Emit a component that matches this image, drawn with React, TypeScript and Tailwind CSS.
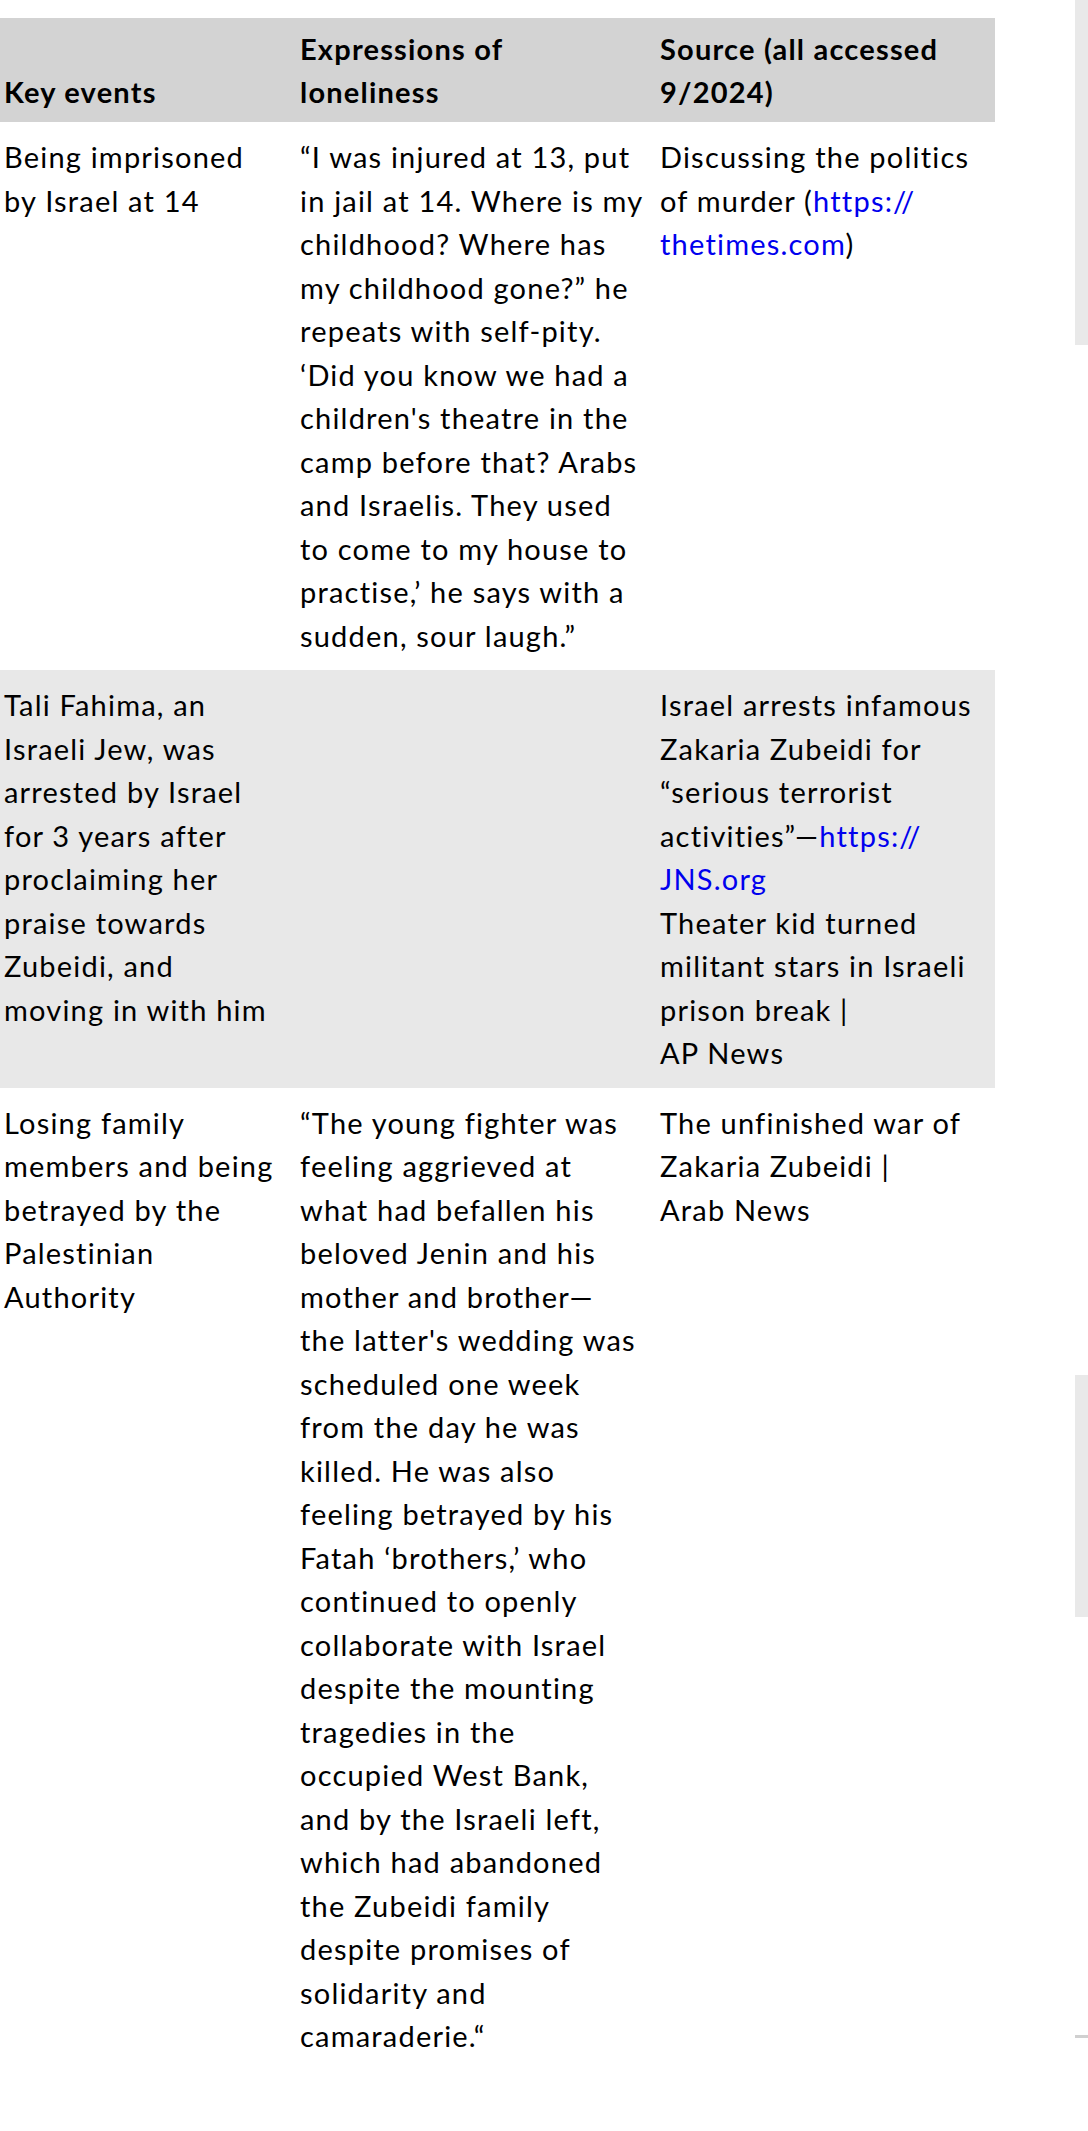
const link = "text-[#0000ee]";

type Row = {
  event: React.ReactNode;
  expression: React.ReactNode;
  source: React.ReactNode;
  shaded?: boolean;
};

// the quote in the first row keeps the line breaks of the source layout
const firstQuote = [
  "\u201CI was injured at 13, put",
  "in jail at 14. Where is my",
  "childhood? Where has",
  "my childhood gone?\u201D he",
  "repeats with self-pity.",
  "\u2018Did you know we had a",
  "children's theatre in the",
  "camp before that? Arabs",
  "and Israelis. They used",
  "to come to my house to",
  "practise,\u2019 he says with a",
  "sudden, sour laugh.\u201D",
];

const rows: Row[] = [
  {
    event: "Being imprisoned by Israel at 14",
    expression: firstQuote.map((line, i) => (
      <span key={i} className="block whitespace-nowrap">
        {line}
      </span>
    )),
    source: (
      <>
        Discussing the politics of murder (
        <a className={link} href="#">
          https://<wbr />thetimes.com
        </a>
        )
      </>
    ),
  },
  {
    event:
      "Tali Fahima, an Israeli Jew, was arrested by Israel for 3 years after proclaiming her praise towards Zubeidi, and moving in with him",
    expression: "",
    source: (
      <>
        Israel arrests infamous Zakaria Zubeidi for {"\u201C"}serious terrorist activities{"\u201D\u2014"}
        <a className={link} href="#">
          https://<wbr />JNS.org
        </a>
        <br />
        Theater kid turned militant stars in Israeli prison break |
        <br />
        AP News
      </>
    ),
    shaded: true,
  },
  {
    event: "Losing family members and being betrayed by the Palestinian Authority",
    expression:
      "\u201CThe young fighter was feeling aggrieved at what had befallen his beloved Jenin and his mother and brother\u2014the latter's wedding was scheduled one week from the day he was killed. He was also feeling betrayed by his Fatah \u2018brothers,\u2019 who continued to openly collaborate with Israel despite the mounting tragedies in the occupied West Bank, and by the Israeli left, which had abandoned the Zubeidi family despite promises of solidarity and camaraderie.\u201C",
    source: (
      <>
        The unfinished war of Zakaria Zubeidi |
        <br />
        Arab News
      </>
    ),
  },
];

export default function App() {
  return (
    <div className="flex min-h-[2131px] w-[1088px] bg-white font-['Lato','Noto_Sans',sans-serif] text-[29px] leading-[43.5px] tracking-[1.2px] text-black">
      <div className="w-[995px] pt-[18px]">
        <table className="w-[995px] table-fixed border-collapse">
          <colgroup>
            <col className="w-[296px]" />
            <col className="w-[360px]" />
            <col className="w-[339px]" />
          </colgroup>
          <thead>
            <tr className="bg-[#d3d3d3]">
              <th className="py-[8.5px] pl-[4px] pr-[20px] text-left align-bottom font-bold">Key events</th>
              <th className="py-[8.5px] pl-[4px] pr-[20px] text-left align-bottom font-bold">Expressions of loneliness</th>
              <th className="py-[8.5px] pl-[4px] pr-[20px] text-left align-bottom font-bold">Source (all accessed 9/2024)</th>
            </tr>
          </thead>
          <tbody>
            {rows.map((r, i) => (
              <tr key={i} className={r.shaded ? "bg-[#e8e8e8]" : ""}>
                <td className="py-[13px] pl-[4px] pr-[20px] align-top">{r.event}</td>
                <td className="py-[13px] pl-[4px] pr-[20px] align-top">{r.expression}</td>
                <td className="py-[13px] pl-[4px] pr-[20px] align-top">{r.source}</td>
              </tr>
            ))}
          </tbody>
        </table>
      </div>
      <div className="ml-[80px] flex w-[13px] flex-col">
        <div className="h-[345px] bg-[#e9e9e9]" />
        <div className="mt-[1030px] h-[242px] bg-[#e9e9e9]" />
        <div className="mt-[418px] h-[3px] bg-[#d0d0d0]" />
      </div>
    </div>
  );
}
